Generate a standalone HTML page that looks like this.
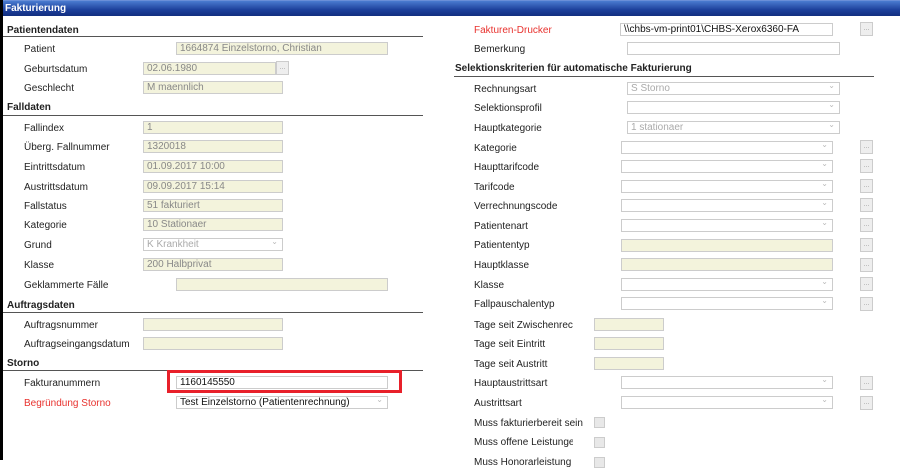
<!DOCTYPE html><html><head><style>
*{margin:0;padding:0;box-sizing:border-box}
body{width:900px;height:460px;overflow:hidden;background:#fff;font-family:"Liberation Sans",sans-serif;font-size:10px;color:#222;position:relative}
#lb{position:absolute;left:0;top:0;width:3px;height:460px;background:#000}
#tb{position:absolute;left:0;top:0;width:900px;height:16px;background:linear-gradient(#4a7bd0,#1c3f9a 60%,#122e80);border-top:1px solid #6a8fd8}
#tb span{position:absolute;left:5px;top:2px;color:#fff;font-weight:bold;font-size:10px}
.l{position:absolute;line-height:12px;white-space:nowrap;margin-top:2px}
.h{position:absolute;font-weight:bold;line-height:12px;margin-top:2px}
.r{color:#e8322e}
.ln{position:absolute;height:1px;background:#555}
.i{position:absolute;height:13px;border:1px solid #ccc;background:#f3f3dc;color:#888;padding-left:3px;line-height:12px;white-space:nowrap;overflow:hidden}
.w{background:#fff;color:#111}
.s{background:#fff;color:#aaa}
.s:after{content:"\2304";position:absolute;right:4px;top:-3px;color:#bbb;font-size:8px}
.b{position:absolute;width:13px;height:14px;border:1px solid #ccc;background:#eee;color:#999;font-size:7px;text-align:center;line-height:12px}
.c{position:absolute;width:11px;height:11px;border:1px solid #ccc;background:#e8e8e8}
</style></head><body>
<div id="tb"><span>Fakturierung</span></div>
<div id="lb"></div>

<div class="h" style="left:7px;top:23px">Patientendaten</div>
<div class="ln" style="left:3px;top:36px;width:420px"></div>
<div class="l" style="left:24px;top:42px">Patient</div><div class="i" style="left:176px;top:42px;width:212px">1664874 Einzelstorno, Christian</div>
<div class="l" style="left:24px;top:62px">Geburtsdatum</div><div class="i" style="left:143px;top:62px;width:133px">02.06.1980</div><div class="b" style="left:276px;top:61px">...</div>
<div class="l" style="left:24px;top:81px">Geschlecht</div><div class="i" style="left:143px;top:81px;width:140px">M maennlich</div>
<div class="h" style="left:7px;top:100px">Falldaten</div>
<div class="ln" style="left:3px;top:115px;width:420px"></div>
<div class="l" style="left:24px;top:121px">Fallindex</div><div class="i" style="left:143px;top:121px;width:140px">1</div>
<div class="l" style="left:24px;top:140px">Überg. Fallnummer</div><div class="i" style="left:143px;top:140px;width:140px">1320018</div>
<div class="l" style="left:24px;top:160px">Eintrittsdatum</div><div class="i" style="left:143px;top:160px;width:140px">01.09.2017 10:00</div>
<div class="l" style="left:24px;top:180px">Austrittsdatum</div><div class="i" style="left:143px;top:180px;width:140px">09.09.2017 15:14</div>
<div class="l" style="left:24px;top:199px">Fallstatus</div><div class="i" style="left:143px;top:199px;width:140px">51 fakturiert</div>
<div class="l" style="left:24px;top:218px">Kategorie</div><div class="i" style="left:143px;top:218px;width:140px">10 Stationaer</div>
<div class="l" style="left:24px;top:238px">Grund</div><div class="i s" style="left:143px;top:238px;width:140px">K Krankheit</div>
<div class="l" style="left:24px;top:258px">Klasse</div><div class="i" style="left:143px;top:258px;width:140px">200 Halbprivat</div>
<div class="l" style="left:24px;top:278px">Geklammerte Fälle</div><div class="i" style="left:176px;top:278px;width:212px"></div>
<div class="h" style="left:7px;top:298px">Auftragsdaten</div>
<div class="ln" style="left:3px;top:312px;width:420px"></div>
<div class="l" style="left:24px;top:318px">Auftragsnummer</div><div class="i" style="left:143px;top:318px;width:140px"></div>
<div class="l" style="left:24px;top:337px">Auftragseingangsdatum</div><div class="i" style="left:143px;top:337px;width:140px"></div>
<div class="h" style="left:7px;top:356px">Storno</div>
<div class="ln" style="left:3px;top:370px;width:420px"></div>
<div class="l" style="left:24px;top:376px">Fakturanummern</div>
<div style="position:absolute;left:167px;top:370px;width:235px;height:23px;border:3px solid #e8202a"></div>
<div class="i w" style="left:176px;top:376px;width:212px">1160145550</div>
<div class="l r" style="left:24px;top:396px">Begründung Storno</div><div class="i w s" style="left:176px;top:396px;width:212px;color:#111">Test Einzelstorno (Patientenrechnung)</div>

<div class="l r" style="left:474px;top:23px">Fakturen-Drucker</div><div class="i w" style="left:620px;top:23px;width:213px">\\chbs-vm-print01\CHBS-Xerox6360-FA</div><div class="b" style="left:860px;top:22px">...</div>
<div class="l" style="left:474px;top:42px">Bemerkung</div><div class="i w" style="left:627px;top:42px;width:213px"></div>
<div class="h" style="left:455px;top:61px">Selektionskriterien für automatische Fakturierung</div>
<div class="ln" style="left:454px;top:76px;width:420px"></div>
<div class="l" style="left:474px;top:82px">Rechnungsart</div><div class="i s" style="left:627px;top:82px;width:213px">S Storno</div>
<div class="l" style="left:474px;top:101px">Selektionsprofil</div><div class="i s" style="left:627px;top:101px;width:213px"></div>
<div class="l" style="left:474px;top:121px">Hauptkategorie</div><div class="i s" style="left:627px;top:121px;width:213px">1 stationaer</div>

<div class="l" style="left:474px;top:141px">Kategorie</div><div class="i s" style="left:621px;top:141px;width:212px"></div><div class="b" style="left:860px;top:140px">...</div>
<div class="l" style="left:474px;top:160px">Haupttarifcode</div><div class="i s" style="left:621px;top:160px;width:212px"></div><div class="b" style="left:860px;top:159px">...</div>
<div class="l" style="left:474px;top:180px">Tarifcode</div><div class="i s" style="left:621px;top:180px;width:212px"></div><div class="b" style="left:860px;top:179px">...</div>
<div class="l" style="left:474px;top:199px">Verrechnungscode</div><div class="i s" style="left:621px;top:199px;width:212px"></div><div class="b" style="left:860px;top:198px">...</div>
<div class="l" style="left:474px;top:219px">Patientenart</div><div class="i s" style="left:621px;top:219px;width:212px"></div><div class="b" style="left:860px;top:218px">...</div>
<div class="l" style="left:474px;top:238px">Patiententyp</div><div class="i" style="left:621px;top:239px;width:212px"></div><div class="b" style="left:860px;top:238px">...</div>
<div class="l" style="left:474px;top:258px">Hauptklasse</div><div class="i" style="left:621px;top:258px;width:212px"></div><div class="b" style="left:860px;top:258px">...</div>
<div class="l" style="left:474px;top:278px">Klasse</div><div class="i s" style="left:621px;top:278px;width:212px"></div><div class="b" style="left:860px;top:277px">...</div>
<div class="l" style="left:474px;top:297px">Fallpauschalentyp</div><div class="i s" style="left:621px;top:297px;width:212px"></div><div class="b" style="left:860px;top:297px">...</div>
<div class="l" style="left:474px;top:318px;width:99px;overflow:hidden">Tage seit Zwischenrechnung</div><div class="i" style="left:594px;top:318px;width:70px"></div>
<div class="l" style="left:474px;top:337px">Tage seit Eintritt</div><div class="i" style="left:594px;top:337px;width:70px"></div>
<div class="l" style="left:474px;top:357px">Tage seit Austritt</div><div class="i" style="left:594px;top:357px;width:70px"></div>
<div class="l" style="left:474px;top:376px">Hauptaustrittsart</div><div class="i s" style="left:621px;top:376px;width:212px"></div><div class="b" style="left:860px;top:376px">...</div>
<div class="l" style="left:474px;top:396px">Austrittsart</div><div class="i s" style="left:621px;top:396px;width:212px"></div><div class="b" style="left:860px;top:396px">...</div>
<div class="l" style="left:474px;top:416px">Muss fakturierbereit sein</div><div class="c" style="left:594px;top:417px"></div>
<div class="l" style="left:474px;top:435px;width:99px;overflow:hidden">Muss offene Leistungen haben</div><div class="c" style="left:594px;top:437px"></div>
<div class="l" style="left:474px;top:455px;width:99px;overflow:hidden">Muss Honorarleistung offen</div><div class="c" style="left:594px;top:457px"></div>
</body></html>
